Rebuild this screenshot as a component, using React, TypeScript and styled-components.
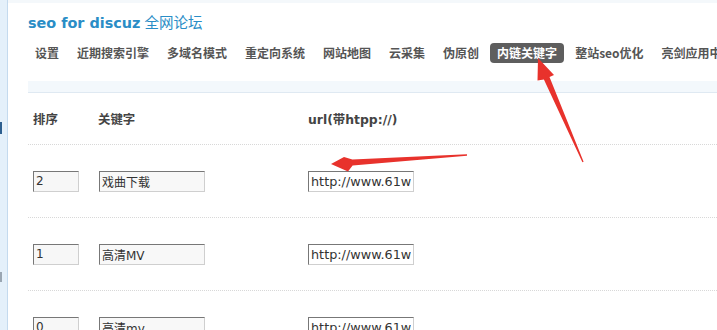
import styled, { createGlobalStyle } from "styled-components";

const GlobalStyle = createGlobalStyle`
  html, body {
    margin: 0;
    padding: 0;
    background: #fff;
    overflow: hidden;
  }
  body {
    width: 717px;
    height: 330px;
    font-family: "DejaVu Sans", "Noto Sans CJK SC", sans-serif;
  }
`;

const Page = styled.div`
  position: relative;
  display: flex;
  width: 717px;
  height: 330px;
  overflow: hidden;
`;

const Sidebar = styled.div`
  width: 7px;
  flex: none;
  background: #e4f0fa;
  border-right: 1px solid #c4daee;
  display: flex;
  flex-direction: column;
`;

const SideMark = styled.span<{ $top: number; $color: string; $h: number }>`
  display: block;
  width: 2px;
  height: ${(p) => p.$h}px;
  margin-top: ${(p) => p.$top}px;
  background: ${(p) => p.$color};
`;

const Main = styled.div`
  flex: 1;
  min-width: 0;
  border-top: 3px solid #f4f8fb;
  padding: 9px 0 0 20px;
`;

const Title = styled.h1`
  margin: 0;
  line-height: 20px;
  font-size: 15px;
  font-weight: normal;
  color: #2a8dc6;
  white-space: nowrap;
`;

const TitleEn = styled.span`
  font-family: "DejaVu Sans", sans-serif;
  font-weight: bold;
  font-size: 14.4px;
`;

const TitleCn = styled.span`
  font-family: "Noto Sans CJK SC", sans-serif;
  font-size: 14.5px;
  margin-left: 4px;
`;

const Nav = styled.ul`
  list-style: none;
  margin: 10px 0 0;
  padding: 0;
  display: flex;
  gap: 4px;
  white-space: nowrap;
`;

const NavItem = styled.li<{ $active?: boolean }>`
  flex: none;
  height: 20px;
  line-height: 20px;
  padding: 0 7px;
  border-radius: 4px;
  font-family: "Noto Sans CJK SC", sans-serif;
  font-size: 12px;
  font-weight: bold;
  color: ${(p) => (p.$active ? "#fff" : "#555")};
  background: ${(p) => (p.$active ? "#5e5e5e" : "transparent")};
`;

const Bar = styled.div`
  margin-top: 18px;
  height: 11px;
  background: #f3f8fc;
  border-bottom: 1px solid #dfe9f2;
`;

const Row = styled.div<{ $h: number }>`
  display: grid;
  grid-template-columns: 65px 210px 1fr;
  align-items: center;
  box-sizing: border-box;
  height: ${(p) => p.$h}px;
  border-bottom: 1px dotted #d8d8d8;
`;

const Cell = styled.div`
  padding-left: 5px;
`;

const HeadCell = styled(Cell)`
  font-family: "DejaVu Sans", "Noto Sans CJK SC", sans-serif;
  font-size: 12.4px;
  font-weight: bold;
  color: #444;
  white-space: nowrap;
`;

const Field = styled.input<{ $w: number; $bg?: string }>`
  box-sizing: border-box;
  width: ${(p) => p.$w}px;
  height: 21px;
  margin: 0 0 0 ${(p) => (p.$w > 50 ? 1 : 0)}px;
  padding: 0 2px;
  border: 1px solid #cfcfcf;
  border-top-color: #777;
  border-left-color: #777;
  background: ${(p) => p.$bg ?? "#fff"};
  font-family: "DejaVu Sans", "Noto Sans CJK SC", sans-serif;
  font-size: 12px;
  color: #333;
  outline: none;
`;

const UrlField = styled(Field)`
  margin-left: 0;
  font-size: 12.8px;
`;

const Overlay = styled.svg`
  position: absolute;
  left: 0;
  top: 0;
  pointer-events: none;
`;

const navs = [
  "设置",
  "近期搜索引擎",
  "多域名模式",
  "重定向系统",
  "网站地图",
  "云采集",
  "伪原创",
  "内链关键字",
  "整站seo优化",
  "亮剑应用中心",
];

const rows = [
  { order: "2", word: "戏曲下载", url: "http://www.61w" },
  { order: "1", word: "高清MV", url: "http://www.61w" },
  { order: "0", word: "高清mv", url: "http://www.61w" },
];

export default function App() {
  return (
    <>
      <GlobalStyle />
      <Page>
        <Sidebar>
          <SideMark $top={122} $h={12} $color="#2d5f8f" />
          <SideMark $top={138} $h={10} $color="#9aa6b2" />
        </Sidebar>
        <Main>
          <Title>
            <TitleEn>seo for discuz</TitleEn>
            <TitleCn>全网论坛</TitleCn>
          </Title>
          <Nav>
            {navs.map((n) => (
              <NavItem key={n} $active={n === "内链关键字"}>
                {n}
              </NavItem>
            ))}
          </Nav>
          <Bar />
          <Row $h={52}>
            <HeadCell>排序</HeadCell>
            <HeadCell>关键字</HeadCell>
            <HeadCell>url(带htpp://)</HeadCell>
          </Row>
          {rows.map((r, i) => (
            <Row key={i} $h={73}>
              <Cell>
                <Field $w={46} $bg="#f7f7f7" defaultValue={r.order} />
              </Cell>
              <Cell>
                <Field $w={106} $bg="#f8f8f8" defaultValue={r.word} />
              </Cell>
              <Cell>
                <UrlField $w={106} defaultValue={r.url} />
              </Cell>
            </Row>
          ))}
        </Main>
        <Overlay width="717" height="330" viewBox="0 0 717 330">
          <polygon
            fill="#e8322c"
            points="538,58 554,75 549.5,77 583.6,161.7 582.4,162.3 543.9,79.4 537.5,80.5"
          />
          <polygon
            fill="#e8322c"
            points="331,164 348,171.5 352.6,165.6 467,155.8 467,154.2 352.4,159.4 344,157"
          />
        </Overlay>
      </Page>
    </>
  );
}
